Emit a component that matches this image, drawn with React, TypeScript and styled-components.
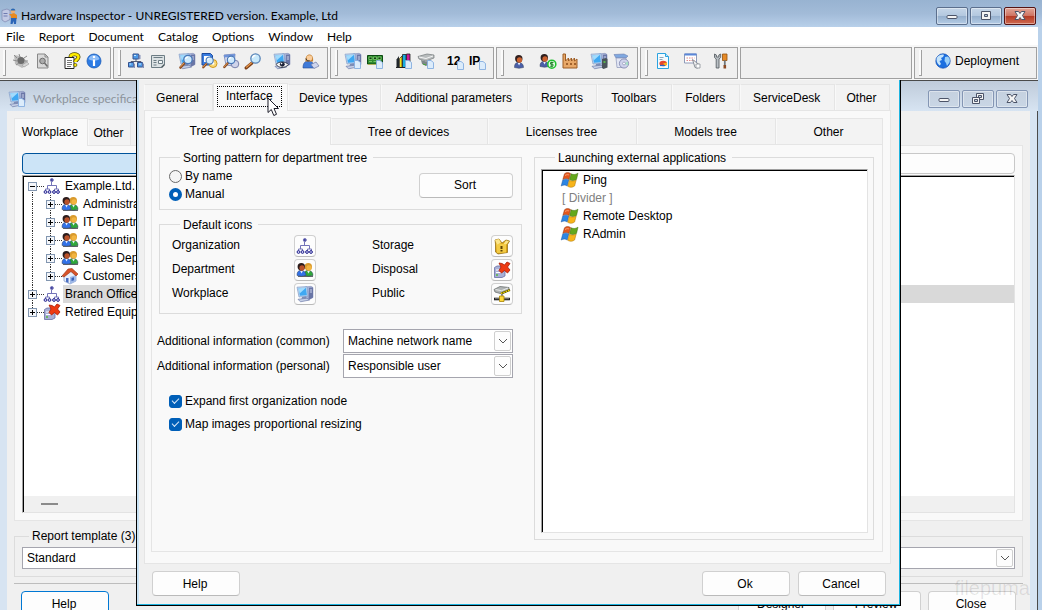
import React, { useState } from 'react';
import styled, { createGlobalStyle, css } from 'styled-components';

const UI_FONT = '"Liberation Sans", Arial, sans-serif';
const CAPTION_FONT = 'Lato, "Open Sans", sans-serif';

const Global = createGlobalStyle`
  *, *::before, *::after { box-sizing: border-box; }
  html, body, #root { height: 100%; }
  body { margin: 0; background: #b9d1ea; overflow: hidden; font: 12px/14px ${UI_FONT}; color: #000; }
  button, input, select { font: inherit; color: inherit; margin: 0; }
  ul { list-style: none; margin: 0; padding: 0; }
`;

/* ---------- icons ---------- */

const Svg = styled.svg`
  display: block;
  flex: none;
  width: 16px;
  height: 16px;
  overflow: visible;
`;

const Pc = () => (
  <g>
    <path d="M8 1 14 .3l2 1.200v10L11 14l-3-1z" fill="#a9b4d8" stroke="#7783b0" strokeWidth=".5" />
    <path d="M12 1.800 16 1.500v10L11.500 14z" fill="#6a76a6" />
    <path d="M12.800 4h2.200M12.800 6h2.200" stroke="#cdd5ee" />
    <path d="M0 1.200 10 .6l1 9.600-9 .8z" fill="#c3d6ee" stroke="#7f9cc8" strokeWidth=".7" />
    <path d="M1.500 2.300 9 1.800l.9 7.400-7 .5z" fill="#3fa8f2" />
    <path d="M1.500 2.300 9 1.800 2.600 7.500z" fill="#a2dbfc" />
    <path d="m5 11 4-.5.500 2-5 .5z" fill="#7d8db5" />
    <path d="m1 13.300 9-1.100 2.500 1.800-9 1.800z" fill="#c5cfe6" stroke="#6c7aa8" strokeWidth=".7" />
  </g>
);
const Sheet = () => (
  <path d="M9.500 7.500h3.500l2.500 2v6h-6z" fill="#dcecfb" stroke="#86aee0" strokeWidth=".9" />
);
const Lens = () => (
  <g>
    <path d="M5.500 10 1.500 14.500" stroke="#8a4a20" strokeWidth="2.600" strokeLinecap="round" />
    <path d="M5 10 1.500 14" stroke="#e8a058" strokeWidth="1" strokeLinecap="round" />
    <circle cx="9" cy="6.500" r="4.200" fill="#cfeafc" stroke="#4a78b8" strokeWidth="1.300" />
    <path d="M6.500 6a2.600 2.600 0 0 1 2.500-2" stroke="#fff" fill="none" strokeWidth="1.200" />
  </g>
);
const Person = ({ head, face, body, x = 0 }: { head: string; face: string; body: string; x?: number }) => (
  <g transform={`translate(${x} 0)`}>
    <path d="M0 13.500c0-3.500 1-5 4-5s5 1.500 5 5l-4.500.8z" fill={body} stroke="#33415f" strokeWidth=".5" />
    <circle cx="4.300" cy="4.800" r="3.700" fill={head} />
    <ellipse cx="5" cy="6" rx="2.600" ry="2.700" fill={face} />
    <path d="M3.200 9h2.600l-1.200 2.500z" fill="#e8f0fc" />
  </g>
);
const Cross = () => (
  <path d="m5 1 3 .5L10.500 3 13 0l3 1.500L13.500 5l2.500 3-2.500 3-3-2.500L7.500 11 5 8.500 7 5z" fill="#ee3a12" stroke="#a81c06" strokeWidth=".8" />
);

const art: Record<string, React.ReactNode> = {
  pc: <Pc />,
  inspector: (
    <g>
      <path d="M0 2.500 5 1l3 1.500v9L3 14l-3-2z" fill="#c2c9e4" stroke="#7c86b0" strokeWidth=".7" />
      <path d="M1.500 5.500h4M1.500 8h4" stroke="#6f7bb0" />
      <circle cx="11" cy="3" r="2.300" fill="#f0b070" />
      <path d="M8.600 2.500C9-.2 13-.2 13.400 2.500z" fill="#2568b8" />
      <path d="M7 6.500 12 5l3 2v4H9V8z" fill="#e88a20" />
      <path d="M9 10h5.500l-.5 6h-2l-.5-3-1 3h-2z" fill="#2b65b8" />
    </g>
  ),
  org: (
    <g fill="none" stroke="#7474b8" strokeWidth="1">
      <path d="M7.500 4v4M3.500 11V7.500h9V11M1.500 13v-2h4v2M10.500 13v-2h4v2" />
      <circle cx="7.800" cy="2" r="1.500" fill="#4343a0" />
      {[1.5, 5.5, 10, 14].map(x => (
        <circle key={x} cx={x} cy="14" r="1.400" fill="#d4d4f8" stroke="#24248c" />
      ))}
    </g>
  ),
  people: (
    <g>
      <path d="M1 14.300h15" stroke="#5c5c5c" strokeWidth="1.200" />
      <Person x={7} head="#d99a2c" face="#f2b440" body="#2fa83a" />
      <Person head="#2b1c1c" face="#b9522a" body="#3272e8" />
    </g>
  ),
  house: (
    <g>
      <path d="m2 7 5-5 7 5v6l-6 3-6-3z" fill="#e7effc" stroke="#7c93c4" strokeWidth=".7" />
      <path d="m8 9 6-2v6l-6 3z" fill="#9eb9e8" />
      <path d="M0 8 6 1l4-.5L16 6l-2 2-5-4.500L2 9z" fill="#d8542a" stroke="#97300f" strokeWidth=".6" />
      <path d="M4 10h2.500v5L4 13.800z" fill="#4a6ec0" />
      <path d="M9.500 10 12 9.200v3l-2.500.8z" fill="#3a62b8" />
    </g>
  ),
  retired: (
    <g>
      <path d="M.5 5.500 3 4h7l1 1.500v8.500L8 15.500H.5z" fill="#a9b0d6" stroke="#676fa4" strokeWidth=".8" />
      <path d="M2 8h5M2 10.500h5" stroke="#fff" />
      <path d="M2 13h2" stroke="#55b83c" strokeWidth="1.500" />
      <Cross />
    </g>
  ),
  storage: (
    <g>
      <path d="m1 2 4-1 3 4 4-3 3.500 1-2 3.500v8L4 16l-2.500-2V6z" fill="#d9a214" stroke="#8d6508" strokeWidth=".7" />
      <path d="m2 5.500 10 .5v8.500l-9 .5z" fill="#f3cb45" />
      <path d="m1 2 4-1 2 4-4 1.500zM12 2.500l3 .8-2.500 3-3-.3z" fill="#fbe58a" />
      <path d="M6.500 8h2v3h-2zM6.500 12h2v1.500h-2z" fill="#5d4304" />
    </g>
  ),
  publicShare: (
    <g>
      <path d="M0 3.500 6 .5l9 1v2.500L8 8 1 6z" fill="#b0b4b4" stroke="#6d7272" strokeWidth=".8" />
      <path d="m1.500 3.500 6 1.200L14 2" stroke="#e8eaea" fill="none" />
      <path d="m7 7.500 9-3.500" stroke="#5a5200" strokeWidth="2" />
      <path d="m7 7.500 9-3.500" stroke="#f2d400" strokeWidth="1.400" strokeDasharray="1.500 1" />
      <path d="M8 8v3" stroke="#777" strokeWidth="1.500" />
      <path d="M0 13h16" stroke="#222" strokeWidth="2.600" />
      <path d="M1 12.700h14" stroke="#9a9a9a" strokeWidth=".8" />
      <path d="M5.500 10h4.500v5.500H5.500z" fill="#ffd83a" stroke="#a88400" strokeWidth=".8" />
    </g>
  ),
  flag: (
    <g>
      <path d="M2.500 1.800C4.500 0 6.500.2 8.600 1.500L7 7.500C5 6.300 3 6.200.8 7.500z" fill="#e4561a" stroke="#8c3410" strokeWidth=".5" />
      <path d="M9.200 1.800c2 1 4.200 1 6.800-.6L14.500 7.400c-2.300 1.500-4.700 1.500-7 .2z" fill="#64a81c" stroke="#3c6c10" strokeWidth=".5" />
      <path d="M.7 8.200c2-1.400 4.200-1.300 6.100-.2l-1.600 6C3.500 12.800 1.500 12.700-.8 14z" fill="#2c86e4" stroke="#17509c" strokeWidth=".5" />
      <path d="M7.300 8.300c2.200 1 4.400 1 6.900-.3l-1.600 6c-2.500 1.800-4.700 1.600-6.900.3z" fill="#f7b41a" stroke="#a87408" strokeWidth=".5" />
      <path d="M3 3.500c1.500-1 3-1 4.200-.5" stroke="#f8a078" fill="none" />
    </g>
  ),
  scan: (
    <g>
      <path d="m1 2 6 1 7 5-1 5-4 2-7-4z" fill="#bcbcbc" />
      <circle cx="8" cy="7.500" r="3.600" fill="#6c6c6c" />
      <path d="m1 2 3 3M6 1l1 3M0 7l4 1M14 3l-3 2M15 8h-3M3 12l3-2" stroke="#8d8d8d" />
      <path d="m9 12 5-3 2 2-5 3z" fill="#d5d5d5" stroke="#9a9a9a" strokeWidth=".6" />
    </g>
  ),
  preview: (
    <g>
      <path d="M2.500 1h7.500l3 3v11H2.500z" fill="#d9d9d9" stroke="#888" />
      <path d="M10 1v3h3" fill="none" stroke="#888" />
      <circle cx="7.500" cy="8" r="2.800" fill="#aaa" stroke="#6e6e6e" />
      <path d="m9.500 10 3 3.500" stroke="#6e6e6e" strokeWidth="1.500" />
    </g>
  ),
  helpDoc: (
    <g>
      <path d="M1 4.500h9v11H1z" fill="#fff" stroke="#222" />
      <path d="M3 7.500h5M3 9.500h5M3 11.500h5M3 13.500h4" stroke="#777" />
      <path d="M6.500 4C6.500.5 14.500.2 14.500 4c0 2.800-3.200 2.800-3.200 5" fill="none" stroke="#4d4700" strokeWidth="4" />
      <path d="M6.500 4C6.500.5 14.500.2 14.500 4c0 2.800-3.200 2.800-3.200 5" fill="none" stroke="#ffed00" strokeWidth="2.500" />
      <circle cx="11.300" cy="12" r="1.600" fill="#ffed00" stroke="#4d4700" strokeWidth=".7" />
    </g>
  ),
  info: (
    <g>
      <circle cx="8" cy="8" r="7" fill="#2c7be4" stroke="#1b5cb8" strokeWidth=".8" />
      <path d="M2.500 6C4 .8 12 .8 13.500 6 11 8 5 8 2.500 6z" fill="#8dbdf8" />
      <path d="M8 3v2M8 6.500V13" stroke="#fff" strokeWidth="2.200" />
    </g>
  ),
  network: (
    <g>
      <path d="M8 5v4M3 12V8.500h10V12" stroke="#555e78" fill="none" />
      <path d="M5 1h5.500v5H5zM.5 9.500h5v4.500h-5zM9.500 9.500h5v4.500h-5z" fill="#4c9ae8" stroke="#35508c" />
      <path d="M10.500 1.500 12.500 2v4l-2 .5zM5.500 10l1.500 1v4l-1.500 0zM14.500 10l1.500 1v4h-1.500z" fill="#8390b8" />
      <path d="M6 2h2v1H6zM1.500 10.500h1.800v1H1.500zM11 10.500h2v1h-2z" fill="#cdeaff" />
    </g>
  ),
  form: (
    <g>
      <path d="M1.500 2.500h13v9l-3 3h-10z" fill="#dce2e4" stroke="#6d7d85" />
      <path d="M3.500 4.500h9M3.500 7.500h3M3.500 9.500h3M3.500 12h3" stroke="#6d7d85" fill="none" />
      <path d="M8.500 7.500h4v3h-4z" fill="#f4f8f8" stroke="#6d7d85" />
      <path d="m14.500 11.500-3 3" stroke="#46545b" strokeWidth="1.500" />
    </g>
  ),
  findPc: <g><Pc /><Lens /></g>,
  findLicense: (
    <g>
      <path d="M1 .5h8.500l2 2V12H1z" fill="#3a7de0" stroke="#1b4a9e" />
      <path d="M3 3h6v6H3z" fill="#fff" />
      <circle cx="12" cy="10.500" r="4" fill="#f8d878" stroke="#d09a1c" />
      <circle cx="12" cy="10.500" r="1.300" fill="#fff" />
      <g transform="translate(1 2) scale(.85)"><Lens /></g>
    </g>
  ),
  findSoft: (
    <g>
      <path d="M1 2 12 1l-1 12-8-1z" fill="#d9def0" stroke="#8b96bd" />
      <path d="m1 2 11-1v2.500L1 4.500z" fill="#6f93d8" />
      <circle cx="12" cy="11" r="3.800" fill="#d0d4ea" stroke="#7981ab" />
      <g transform="translate(0 1) scale(.9)"><Lens /></g>
    </g>
  ),
  find: (
    <g>
      <path d="M7 10 1 15" stroke="#7d4018" strokeWidth="3" strokeLinecap="round" />
      <path d="m6.500 9.800-5 4.400" stroke="#e9994c" strokeWidth="1.200" strokeLinecap="round" />
      <circle cx="10.500" cy="5.500" r="4.700" fill="#c8e9fb" stroke="#5b86b8" strokeWidth="1.300" />
      <path d="M7.500 5a3 3 0 0 1 3-2.500" stroke="#fff" fill="none" strokeWidth="1.300" />
    </g>
  ),
  watch: (
    <g>
      <Pc />
      <path d="M2 11.500C5 8 11 8 14.500 11.500 11 15.500 5 15.500 2 11.500z" fill="#f3f3f3" stroke="#3d4254" />
      <circle cx="8.300" cy="11.300" r="2.400" fill="#1c2238" />
      <circle cx="7.600" cy="10.600" r=".8" fill="#fff" />
    </g>
  ),
  support: (
    <g>
      <path d="M0 15c0-5 2-7 5.500-7s5.500 2 5.500 7z" fill="#3f7ad8" stroke="#234a94" strokeWidth=".6" />
      <path d="M2.500 8.500C1.500-1 11.500-1 10 8.500z" fill="#c88434" />
      <circle cx="6.400" cy="5" r="2.800" fill="#f9cd9c" />
      <path d="M3 5.500C3.500 8 5 8 6.500 7.500" stroke="#333" fill="none" />
      <path d="m8 11.500 5-2.500 3 4-5 2.500z" fill="#cfd6ee" stroke="#6e78a4" strokeWidth=".7" />
    </g>
  ),
  newPc: <g><Pc /><Sheet /></g>,
  newBoard: (
    <g>
      <path d="M.5 2.500h15v8.500H.5z" fill="#2f8a30" stroke="#0d4a12" />
      <path d="M2 4h3v2.500H2zM6.500 4h3v2.500h-3zM11 4h3v2.500h-3zM2 8.500h3M6.500 8.500h3" fill="#103c12" stroke="#8ddc78" strokeWidth=".7" />
      <path d="M1.500 11.500h8" stroke="#e2c53a" strokeDasharray="1 1" />
      <Sheet />
    </g>
  ),
  newInk: (
    <g>
      <path d="M.5 6.500 3 3v11H.5z" fill="#20262b" />
      <path d="M3.500 5.500 6 3v11.500H3.500z" fill="#f5e21c" stroke="#222" strokeWidth=".7" />
      <path d="M6.500 1.500H10v13H6.500z" fill="#16aee0" stroke="#222" strokeWidth=".8" />
      <path d="M10.500 1h3.500v12h-3.500z" fill="#d01898" stroke="#222" strokeWidth=".8" />
      <path d="M0 14.500h12" stroke="#222" />
      <Sheet />
    </g>
  ),
  newPrinter: (
    <g>
      <path d="M0 3.500 9 1l7 1v3L8 8 1 6z" fill="#b8bcbd" stroke="#73797a" strokeWidth=".7" />
      <path d="m1 4 7 1.500L15 3" stroke="#f4f4f4" fill="none" />
      <path d="m3 7 5 1.500 4-1.500v4l-4 2-4-2z" fill="#7d8688" />
      <path d="m5 11 3 1" stroke="#44a83a" />
      <Sheet />
    </g>
  ),
  user: (
    <g transform="translate(3.500 1)">
      <Person head="#30201f" face="#cc6230" body="#4a5fa8" />
    </g>
  ),
  userMoney: (
    <g>
      <Person head="#30201f" face="#cc6230" body="#4a5fa8" />
      <circle cx="11.800" cy="11.200" r="4" fill="#eaffea" stroke="#20c030" strokeWidth="1.600" />
      <path d="M13.500 9.500h-3v1.700h2.500v2h-3M11.800 8.500v5.800" stroke="#167a20" fill="none" strokeWidth=".9" />
    </g>
  ),
  factory: (
    <g>
      <path d="M1 15V1h2.500v7l3-3v3l3-3v3l3-3v3L15 6v9z" fill="#e8a868" stroke="#9c5c24" strokeWidth="1" />
      <path d="M4 11h2M8 11h2M12 11h2" stroke="#8a4b18" strokeWidth="1.500" />
    </g>
  ),
  pcGroup: (
    <g>
      <Pc />
      <path d="m11 6 4-1 1.500 1v8.500l-4 1.500-1.500-1z" fill="#4a545a" />
      <path d="M12.500 9h2" stroke="#5dd048" strokeWidth="1.500" />
    </g>
  ),
  software: (
    <g>
      <path d="M1 1.500 11 1l4 2-2 2H3z" fill="#7fa8e0" stroke="#6d7fb0" strokeWidth=".6" />
      <path d="M3 5h10l-1 9.500H4z" fill="#e2e6f4" stroke="#8a93b8" strokeWidth=".7" />
      <circle cx="11" cy="10.500" r="4.600" fill="#cfd3ec" stroke="#7b82aa" strokeWidth=".8" />
      <path d="m11 10.500 4-2v4z" fill="#a4e0c4" />
      <circle cx="11" cy="10.500" r="1.400" fill="#fff" stroke="#7b82aa" strokeWidth=".6" />
    </g>
  ),
  report: (
    <g>
      <path d="M2.500.500h8l3 3v12h-11z" fill="#f2fbff" stroke="#2ba3e0" />
      <path d="M10.500.500v3h3" fill="#bde6fa" stroke="#2ba3e0" />
      <path d="M4.500 4.500h4M4.500 6.500h3" stroke="#8fa4b8" />
      <ellipse cx="8.200" cy="10.500" rx="3.800" ry="2.800" fill="#e6482c" />
      <path d="M8.200 10.500 11.800 9.500a3 2.500 0 0 1-2 3.500z" fill="#f6b81c" />
      <path d="M5 12.500h5" stroke="#2b64c0" strokeWidth="1.200" />
    </g>
  ),
  schedule: (
    <g>
      <path d="M.5 1h12v9H.5z" fill="#fff" stroke="#8f9ab8" />
      <path d="M.5 1.500h12" stroke="#5a86d8" strokeWidth="2" />
      <path d="M2.500 5h8M2.500 7.500h8" stroke="#e08a8a" strokeDasharray="1.500 1" />
      <path d="m8.500 6.500 6.500 5-1 3.500-3-.5z" fill="#f4f4f4" stroke="#8a8f98" />
      <path d="M12 11h4v4h-4z" fill="#fff" stroke="#8a8f98" strokeWidth=".8" />
    </g>
  ),
  tools: (
    <g>
      <path d="M1.500 1v3.500L3.200 6v9h2.800V6l1.700-1.500V1L5.800 2v2H3.400V2z" fill="#b9bfc4" stroke="#5c6368" strokeWidth=".9" />
      <path d="M9.500 1h4.500v6.500H9.500z" fill="#e58a28" stroke="#94500c" strokeWidth=".8" />
      <path d="M11.800 7.500v5" stroke="#70777c" strokeWidth="1.800" />
      <path d="M10.500 12h2.600v3.500h-2.600z" fill="#8b4a24" />
    </g>
  ),
  globe: (
    <g>
      <circle cx="8" cy="8" r="7.200" fill="#1c6fe0" stroke="#0f4bb0" strokeWidth=".7" />
      <path d="M2 4.500C4 1.500 8 1 9 2L8 4 6 5l1 2-2.500 1L6 11l-1.500 1.500C1.500 10 1 7 2 4.500z" fill="#c5e4fb" />
      <path d="m10 4 3-.5c2 2 2.200 4 1.500 6l-2.500 3.500-1-3-1.500-2z" fill="#9cd0f8" />
    </g>
  ),
};

const Icon = ({ name }: { name: string }) => (
  <Svg viewBox="0 0 16 16" aria-hidden="true">{art[name]}</Svg>
);

/* ---------- main window ---------- */

const MainWindow = styled.div`
  height: 100vh;
  display: flex;
  flex-direction: column;
  overflow: hidden;
`;

const TitleBar = styled.header`
  flex: none;
  display: flex;
  align-items: center;
  gap: 3px;
  height: 27px;
  padding: 4px 6px 0 2px;
  background: linear-gradient(#98b3d1, #a2bbd8 50%, #b8d0ea);
  font-family: ${CAPTION_FONT};
`;

const Caption = styled.h1<{ $inactive?: boolean }>`
  flex: 1;
  margin: 0;
  font: 12px/16px ${CAPTION_FONT};
  white-space: nowrap;
  color: ${p => (p.$inactive ? '#8d949c' : '#000')};
`;

const CaptionButtons = styled.div`
  display: flex;
  gap: 2px;
`;

type Tone = 'active' | 'idle' | 'close';
const tones = {
  active: css`
    border-color: #5b6f8d;
    background: linear-gradient(#c6d6e8, #b3c8df 48%, #96b0cd 52%, #b4cce6);
  `,
  idle: css`
    border-color: #8496b4;
    background: linear-gradient(#c5d1df, #c9d6e5);
  `,
  close: css`
    border-color: #561414;
    background: linear-gradient(#e2a698, #cf7463 48%, #b53b25 52%, #cf6a50);
  `,
};

const CaptionButton = styled.button<{ $tone: Tone }>`
  width: 32px;
  height: 18px;
  padding: 0;
  display: grid;
  place-items: center;
  border: 1px solid;
  border-radius: 2px;
  box-shadow: inset 0 0 0 1px #ffffff66;
  ${p => tones[p.$tone]}
`;

const glyphs = {
  minimize: <rect x="3" y="7.500" width="10" height="3" rx="1" />,
  maximize: <path fillRule="evenodd" d="M3.500 3.500h9v8h-9zM6.500 6.500v2h3v-2z" />,
  restore: (
    <g>
      <path fillRule="evenodd" d="M6.500 2.500h7v6h-7zM8.500 4.500v2h3v-2z" />
      <path fillRule="evenodd" d="M2.500 6.500h7v6h-7zM4.500 8.500v2h3v-2z" />
    </g>
  ),
  close: <path d="M3 3.500h3.500L8 5.500l1.500-2H13L10.500 7.500l2.500 4H9.500L8 9.500l-1.500 2H3l2.500-4z" />,
};

const CaptionSet = ({ middle, idle }: { middle: 'maximize' | 'restore'; idle?: boolean }) => {
  const base: Tone = idle ? 'idle' : 'active';
  return (
    <CaptionButtons>
      {(['minimize', middle, 'close'] as const).map(g => (
        <CaptionButton key={g} aria-label={g} $tone={g === 'close' && !idle ? 'close' : base}>
          <Svg viewBox="0 0 16 16" fill="#f4f4f4" stroke="#4c5468" strokeWidth="1">{glyphs[g]}</Svg>
        </CaptionButton>
      ))}
    </CaptionButtons>
  );
};

const WindowBody = styled.div`
  flex: 1;
  min-height: 0;
  display: flex;
  flex-direction: column;
  margin-right: 4px;
  background: #f0f0f0;
`;

const MenuBar = styled.nav`
  flex: none;
  display: flex;
  gap: 14px;
  height: 18px;
  padding: 0 6px;
  background: #fff;
`;

const MenuItem = styled.button`
  padding: 1px 0 0;
  border: 0;
  background: none;
  font: 12px/17px ${CAPTION_FONT};
`;

const Toolbars = styled.div`
  flex: none;
  display: flex;
  gap: 2px;
  height: 35px;
  padding: 2px 1px 1px 0;
  background: #f7f7f7;
`;

const Band = styled.div<{ $first?: boolean; $fill?: boolean }>`
  flex: ${p => (p.$fill ? 1 : 'none')};
  display: flex;
  align-items: flex-start;
  padding: 2px 5px 0 ${p => (p.$first ? 3 : 4)}px;
  border: 1px solid #a0a0a0;
  border-left-width: ${p => (p.$first ? 0 : 1)}px;
  background: #f0f0f0;
`;

const Grip = styled.span`
  width: 3px;
  height: 26px;
  margin-right: 4px;
  border: 1px solid #a0a0a0;
  border-width: 0 1px 1px 0;
  background: #fafafa;
`;

const ToolGroup = styled.div`
  display: flex;
  & + & { margin-left: 7px; }
`;

const ToolButton = styled.button`
  display: flex;
  align-items: center;
  justify-content: center;
  width: 22px;
  height: 22px;
  padding: 0;
  border: 0;
  background: none;
`;

const DeployButton = styled(ToolButton)`
  width: auto;
  gap: 4px;
  padding: 0 12px 0 9px;
`;

const TextTool = styled.span`
  position: relative;
  width: 16px;
  font: bold 12px/16px ${UI_FONT};
  text-align: left;
`;
const TextToolSheet = styled.span`
  position: absolute;
  right: -1px;
  bottom: -1px;
`;

const toolGroups: string[][][] = [
  [['scan', 'preview'], ['helpDoc', 'info']],
  [['network', 'form'], ['findPc', 'findLicense', 'findSoft', 'find'], ['watch'], ['support']],
  [['newPc', 'newBoard'], ['newInk', 'newPrinter'], ['12', 'IP']],
  [['user'], ['userMoney', 'factory'], ['pcGroup', 'software']],
  [['report'], ['schedule'], ['tools']],
];

/* ---------- shared controls ---------- */

const PushButton = styled.button<{ $default?: boolean; $wide?: boolean }>`
  width: ${p => (p.$wide ? 94 : 88)}px;
  height: 25px;
  padding: 0 2px 0 0;
  border: 1px solid ${p => (p.$default ? '#0078d4' : '#d0d0d0')};
  border-bottom-color: ${p => (p.$default ? '#0078d4' : '#bababa')};
  border-radius: 4px;
  background: #fdfdfd;
`;

const TabStrip = styled.div`
  display: flex;
  align-items: flex-end;
`;

const Tab = styled.button<{ $w: number; $selected?: boolean }>`
  flex: 0 1 ${p => p.$w}px;
  min-width: 0;
  height: ${p => (p.$selected ? 28 : 26)}px;
  margin-bottom: ${p => (p.$selected ? -1 : 0)}px;
  padding: 0 2px ${p => (p.$selected ? 2 : 0)}px 0;
  border: 1px solid #e5e5e5;
  border-bottom: 0;
  border-left-color: ${p => (p.$selected ? '#e5e5e5' : '#f9f9f9')};
  background: ${p => (p.$selected ? '#f9f9f9' : '#f3f3f3')};
  white-space: nowrap;
  position: relative;
`;

const FocusMark = styled.span`
  display: inline-block;
  padding: 2px 8px 3px;
  border: 1px dotted #000;
`;

const TabPanel = styled.section`
  border: 1px solid #e5e5e5;
  background: #f9f9f9;
`;

const Group = styled.fieldset`
  min-width: 0;
  margin: 0;
  padding: 0;
  border: 1px solid #dcdcdc;
`;

const GroupTitle = styled.legend<{ $indent: number }>`
  margin-left: ${p => p.$indent}px;
  padding: 0 4px 0 3px;
  line-height: 14px;
`;

const LowGroupTitle = styled(GroupTitle)`
  padding-top: 2px;
  padding-right: 6px;
`;

const Combo = styled.div<{ $small?: boolean }>`
  position: relative;
  height: ${p => (p.$small ? 22 : 24)}px;
`;

const ComboSelect = styled.select`
  appearance: none;
  display: block;
  width: 100%;
  height: 100%;
  padding: 0 24px 0 4px;
  border: 1px solid #a5a5ae;
  border-radius: 0;
  background: #fff;
`;

const ComboArrow = styled.span`
  position: absolute;
  top: 2px;
  right: 2px;
  bottom: 2px;
  width: 17px;
  display: grid;
  place-items: center;
  border: 1px solid #cfcfcf;
  border-radius: 2px;
  background: #fdfdfd;
  pointer-events: none;
`;

const Dropdown = ({ id, options, small, label }: { id: string; options: string[]; small?: boolean; label?: string }) => (
  <Combo $small={small}>
    <ComboSelect id={id} aria-label={label}>
      {options.map(o => <option key={o}>{o}</option>)}
    </ComboSelect>
    <ComboArrow>
      <Svg viewBox="0 0 16 16"><path d="m4 6 4 4 4-4" fill="none" stroke="#555" /></Svg>
    </ComboArrow>
  </Combo>
);

const OptionLabel = styled.label`
  display: flex;
  align-items: center;
  gap: 3px;
  height: 18px;
`;

const Radio = styled.input.attrs({ type: 'radio' })`
  appearance: none;
  width: 13px;
  height: 13px;
  border: 1px solid #6a6a6a;
  border-radius: 50%;
  background: #f5f5f5;
  &:checked { border: 4px solid #005fb8; background: #fff; }
`;

const Check = styled.input.attrs({ type: 'checkbox' })`
  appearance: none;
  display: grid;
  place-items: center;
  width: 13px;
  height: 13px;
  border: 1px solid #6a6a6a;
  border-radius: 3px;
  background: #f5f5f5;
  &:checked { border-color: #005fb8; background: #005fb8; }
  &:checked::after {
    content: '';
    width: 7px;
    height: 4px;
    border: solid #d8e8f8;
    border-width: 0 0 1px 1px;
    transform: translateY(-1px) rotate(-45deg);
  }
`;

/* ---------- workplace window ---------- */

const Workspace = styled.main`
  position: relative;
  flex: 1;
  min-height: 0;
  overflow: hidden;
`;

const ChildWindow = styled.section`
  border-top: 1px solid #4a4a4a;
`;

const ChildTitle = styled.header`
  display: flex;
  align-items: center;
  gap: 8px;
  height: 30px;
  padding: 6px 10px 0 9px;
  background: linear-gradient(#bfcbda, #d7e4f2);
`;

const ChildBody = styled.div`
  display: flex;
  flex-direction: column;
  padding: 7px;
  border: solid #d7e4f2;
  border-width: 0 7px;
  background: #f0f0f0;
`;

const ChildFrame = styled.div`
  border-right: 1px solid #4a4a4a;
`;

const TreePanel = styled(TabPanel)`
  padding: 7px 7px 7px;
`;

const FilterRow = styled.div`
  display: flex;
`;

const FilterButton = styled.button<{ $active?: boolean }>`
  flex: 1;
  height: 21px;
  border: 1px solid ${p => (p.$active ? '#00549c' : '#c8c8c8')};
  border-radius: 4px;
  background: ${p => (p.$active ? '#cce4f7' : '#fdfdfd')};
`;

const TreeBox = styled.div`
  display: flex;
  flex-direction: column;
  height: 338px;
  margin-top: 1px;
  border: 1px solid #e3e3e3;
  border-top-color: #a0a0a0;
  border-left-color: #a0a0a0;
  background: #fff;
  box-shadow: inset 1px 1px #000;
`;

const TreeList = styled.ul`
  flex: 1;
  padding: 1px 0 0 1px;
`;

const TreeRow = styled.li`
  display: flex;
  align-items: center;
  height: 18px;
`;

const TreeLabel = styled.span<{ $selected?: boolean }>`
  flex: 1;
  margin-left: 3px;
  padding-left: 2px;
  line-height: 18px;
  white-space: nowrap;
  background: ${p => (p.$selected ? '#d9d9d9' : 'none')};
`;

const BranchSvg = styled.svg`
  display: block;
  flex: none;
  width: 20px;
  height: 18px;
  & + & { margin-left: -2px; }
`;

const ScrollTrack = styled.div`
  display: flex;
  align-items: center;
  height: 16px;
  margin-left: 1px;
  padding-left: 17px;
  background: #f0f0f0;
`;
const ScrollThumb = styled.span`
  width: 17px;
  height: 2px;
  background: #8b8b8b;
`;

type Branch = { up?: boolean; down?: boolean; sign?: '+' | '-' };
const BranchCell = ({ up, down, sign }: Branch) => (
  <BranchSvg viewBox="0 0 20 18" shapeRendering="crispEdges">
    {up && <path d="M8.500 0v9" stroke="#333" strokeDasharray="1 1" />}
    {down && <path d="M8.500 9v9" stroke="#333" strokeDasharray="1 1" />}
    {sign && (
      <g>
        <path d="M13 9.500h7" stroke="#333" strokeDasharray="1 1" />
        <rect x="4.500" y="5.500" width="8" height="8" fill="#f4f6fa" stroke="#8296b0" />
        <path d={sign === '+' ? 'M6 9.500h5M8.500 7v5' : 'M6 9.500h5'} stroke="#000" />
      </g>
    )}
  </BranchSvg>
);

const nodes: { label: string; icon: string; sign: '+' | '-'; level: number; selected?: boolean }[] = [
  { label: 'Example.Ltd.', icon: 'org', sign: '-', level: 0 },
  { label: 'Administration', icon: 'people', sign: '+', level: 1 },
  { label: 'IT Department', icon: 'people', sign: '+', level: 1 },
  { label: 'Accounting', icon: 'people', sign: '+', level: 1 },
  { label: 'Sales Department', icon: 'people', sign: '+', level: 1 },
  { label: 'Customers', icon: 'house', sign: '+', level: 1 },
  { label: 'Branch Office', icon: 'org', sign: '+', level: 0, selected: true },
  { label: 'Retired Equipment', icon: 'retired', sign: '+', level: 0 },
];

const TemplateGroup = styled(Group)`
  margin-top: 8px;
  padding: 4px 7px 7px;
`;

const Rule = styled.hr`
  width: 100%;
  margin: 6px 0 7px;
  border: 0;
  border-top: 1px solid #bdbdbd;
`;

const ChildActions = styled.div`
  display: flex;
  gap: 7px;
  padding: 0 7px;
  & > :first-child { margin-right: auto; }
`;

/* ---------- settings dialog ---------- */

const Dialog = styled.section`
  position: absolute;
  top: 0;
  left: 136px;
  right: 137px;
  bottom: 4px;
  display: flex;
  flex-direction: column;
  padding: 3px 9px 9px 6px;
  border: 1px solid #000;
  border-top: 0;
  background: #f0f0f0;
  box-shadow: inset -1px -1px #1fb4e0, inset 2px 0 #c8e2f4;
`;

const PageTabs = styled(TabStrip)`
  padding: 0 1px;
`;

const PagePanel = styled(TabPanel)`
  flex: 1;
  min-height: 0;
  display: flex;
  flex-direction: column;
  margin-left: 1px;
  padding: 6px 7px 11px 6px;
`;

const SettingsPanel = styled(TabPanel)`
  flex: 1;
  min-height: 0;
  display: flex;
  gap: 12px;
  padding: 4px 8px 11px 5px;
`;

const LeftColumn = styled.div`
  flex: 0 0 365px;
  display: flex;
  flex-direction: column;
`;

const SortGroup = styled(Group)`
  display: flex;
  justify-content: space-between;
  align-items: center;
  height: 61px;
  margin-left: 2px;
  padding: 2px 8px 0 9px;
`;

const IconGroup = styled(Group)`
  display: grid;
  grid-template-columns: 122px 1fr 119px 22px;
  grid-auto-rows: 24px;
  align-items: center;
  height: 98px;
  margin: 6px 0 0 2px;
  padding: 2px 8px 0 12px;
`;

const IconButton = styled.button`
  display: grid;
  place-items: center;
  width: 22px;
  height: 22px;
  padding: 0;
  border: 1px solid #d0d0d0;
  border-bottom-color: #bababa;
  border-radius: 4px;
  background: #fdfdfd;
`;

const InfoFields = styled.div`
  display: grid;
  grid-template-columns: 1fr 170px;
  row-gap: 1px;
  align-items: center;
  margin: 15px 9px 0 0;
`;

const Checks = styled.div`
  display: flex;
  flex-direction: column;
  gap: 5px;
  padding: 14px 0 0 12px;
`;

const AppsGroup = styled(Group)`
  flex: 1;
  display: flex;
  padding: 4px 5px 6px 6px;
`;

const AppList = styled.ul`
  flex: 1;
  padding: 1px 0 0 20px;
  border: 1px solid #e3e3e3;
  border-top-color: #a0a0a0;
  border-left-color: #a0a0a0;
  background: #fff;
  box-shadow: inset 1px 1px #000;
`;

const AppRow = styled.li<{ $divider?: boolean }>`
  display: flex;
  align-items: center;
  gap: 5px;
  height: 18px;
  color: ${p => (p.$divider ? '#808080' : 'inherit')};
`;

const DialogActions = styled.div`
  display: flex;
  gap: 8px;
  padding: 7px 5px 0 9px;
  & > :first-child { margin-right: auto; }
`;

const Pointer = styled.svg`
  position: absolute;
  left: 130px;
  top: 17px;
  width: 13px;
  height: 20px;
`;

const Watermark = styled.span`
  position: absolute;
  right: 8px;
  bottom: 12px;
  font-size: 20px;
  line-height: 20px;
  color: #00000018;
`;

const pageTabs: [string, number][] = [
  ['General', 69], ['Interface', 75], ['Device types', 93], ['Additional parameters', 148],
  ['Reports', 69], ['Toolbars', 75], ['Folders', 68], ['ServiceDesk', 95], ['Other', 55],
];
const treeTabs: [string, number][] = [
  ['Tree of workplaces', 180], ['Tree of devices', 157], ['Licenses tree', 149], ['Models tree', 139], ['Other', 107],
];
const defaultIcons: [string, string][] = [
  ['Organization', 'org'], ['Storage', 'storage'],
  ['Department', 'people'], ['Disposal', 'retired'],
  ['Workplace', 'pc'], ['Public', 'publicShare'],
];
const apps = ['Ping', '', 'Remote Desktop', 'RAdmin'];

const IconCaption = styled.span`
  line-height: 14px;
  padding-bottom: 2px;
`;

const SettingsDialog = () => {
  const [order, setOrder] = useState('manual');
  return (
    <Dialog role="dialog" aria-label="Options">
      <PageTabs role="tablist">
        {pageTabs.map(([t, w]) => {
          const selected = t === 'Interface';
          return (
            <Tab key={t} role="tab" aria-selected={selected} $w={w} $selected={selected}>
              {selected ? <FocusMark>{t}</FocusMark> : t}
            </Tab>
          );
        })}
      </PageTabs>
      <PagePanel>
        <TabStrip role="tablist">
          {treeTabs.map(([t, w], i) => (
            <Tab key={t} role="tab" aria-selected={i === 0} $w={w} $selected={i === 0}>{t}</Tab>
          ))}
        </TabStrip>
        <SettingsPanel>
          <LeftColumn>
            <SortGroup>
              <LowGroupTitle $indent={11}>Sorting pattern for department tree</LowGroupTitle>
              <div>
                <OptionLabel>
                  <Radio name="order" checked={order === 'name'} onChange={() => setOrder('name')} />By name
                </OptionLabel>
                <OptionLabel>
                  <Radio name="order" checked={order === 'manual'} onChange={() => setOrder('manual')} />Manual
                </OptionLabel>
              </div>
              <PushButton $wide>Sort</PushButton>
            </SortGroup>
            <IconGroup>
              <LowGroupTitle $indent={8}>Default icons</LowGroupTitle>
              {defaultIcons.map(([label, icon]) => (
                <React.Fragment key={label}>
                  <IconCaption>{label}</IconCaption>
                  <IconButton aria-label={label}><Icon name={icon} /></IconButton>
                </React.Fragment>
              ))}
            </IconGroup>
            <InfoFields>
              <label htmlFor="info-common">Additional information (common)</label>
              <Dropdown id="info-common" options={['Machine network name', 'Responsible user']} />
              <label htmlFor="info-personal">Additional information (personal)</label>
              <Dropdown id="info-personal" options={['Responsible user', 'Machine network name']} />
            </InfoFields>
            <Checks>
              <OptionLabel><Check defaultChecked />Expand first organization node</OptionLabel>
              <OptionLabel><Check defaultChecked />Map images proportional resizing</OptionLabel>
            </Checks>
          </LeftColumn>
          <AppsGroup>
            <LowGroupTitle $indent={14}>Launching external applications</LowGroupTitle>
            <AppList>
              {apps.map(a => (
                <AppRow key={a} $divider={!a}>
                  {a ? <><Icon name="flag" />{a}</> : '[ Divider ]'}
                </AppRow>
              ))}
            </AppList>
          </AppsGroup>
        </SettingsPanel>
      </PagePanel>
      <DialogActions>
        <PushButton>Help</PushButton>
        <PushButton>Ok</PushButton>
        <PushButton>Cancel</PushButton>
      </DialogActions>
      <Pointer viewBox="0 0 13 20">
        <path d="M1 1v14.500l3.300-3L6.800 18.500l2.700-1.200L7 11.500h4.500z" fill="#fff" stroke="#1c1c28" />
      </Pointer>
    </Dialog>
  );
};

const WorkplaceWindow = () => (
  <ChildWindow>
    <ChildTitle>
      <Icon name="newPc" />
      <Caption as="h2" $inactive>Workplace specification</Caption>
      <CaptionSet middle="restore" idle />
    </ChildTitle>
    <ChildFrame>
      <ChildBody>
        <TabStrip role="tablist">
          <Tab role="tab" aria-selected $w={74} $selected>Workplace</Tab>
          <Tab role="tab" $w={43}>Other</Tab>
        </TabStrip>
        <TreePanel>
          <FilterRow>
            <FilterButton $active aria-label="Show tree" />
            <FilterButton aria-label="Show filter" />
          </FilterRow>
          <TreeBox>
            <TreeList>
              {nodes.map((n, i) => (
                <TreeRow key={n.label}>
                  {n.level === 1 && <BranchCell up down />}
                  <BranchCell
                    up={i > 0}
                    down={i < nodes.length - 1 && !(n.level === 1 && nodes[i + 1].level === 0)}
                    sign={n.sign}
                  />
                  <Icon name={n.icon} />
                  <TreeLabel $selected={n.selected}>{n.label}</TreeLabel>
                </TreeRow>
              ))}
            </TreeList>
            <ScrollTrack><ScrollThumb /></ScrollTrack>
          </TreeBox>
        </TreePanel>
        <TemplateGroup>
          <GroupTitle $indent={7}>Report template (3)</GroupTitle>
          <Dropdown id="template" label="Report template" small options={['Standard']} />
        </TemplateGroup>
        <Rule />
        <ChildActions>
          <PushButton $default>Help</PushButton>
          <PushButton>Designer</PushButton>
          <PushButton>Preview</PushButton>
          <PushButton>Close</PushButton>
        </ChildActions>
      </ChildBody>
    </ChildFrame>
  </ChildWindow>
);

export default function App() {
  return (
    <MainWindow>
      <Global />
      <TitleBar>
        <Icon name="inspector" />
        <Caption>Hardware Inspector - UNREGISTERED version. Example, Ltd</Caption>
        <CaptionSet middle="maximize" />
      </TitleBar>
      <WindowBody>
        <MenuBar>
          {['File', 'Report', 'Document', 'Catalog', 'Options', 'Window', 'Help'].map(m => (
            <MenuItem key={m}>{m}</MenuItem>
          ))}
        </MenuBar>
        <Toolbars>
          {toolGroups.map((groups, b) => (
            <Band key={b} $first={b === 0}>
              <Grip />
              {groups.map((g, i) => (
                <ToolGroup key={i}>
                  {g.map(n => (
                    <ToolButton key={n} aria-label={n}>
                      {art[n] ? <Icon name={n} /> : (
                        <TextTool>
                          {n}
                          <TextToolSheet><Svg viewBox="0 0 16 16"><Sheet /></Svg></TextToolSheet>
                        </TextTool>
                      )}
                    </ToolButton>
                  ))}
                </ToolGroup>
              ))}
            </Band>
          ))}
          <Band $fill />
          <Band>
            <Grip />
            <DeployButton><Icon name="globe" />Deployment</DeployButton>
          </Band>
        </Toolbars>
        <Workspace>
          <WorkplaceWindow />
          <SettingsDialog />
          <Watermark>filepuma</Watermark>
        </Workspace>
      </WindowBody>
    </MainWindow>
  );
}
